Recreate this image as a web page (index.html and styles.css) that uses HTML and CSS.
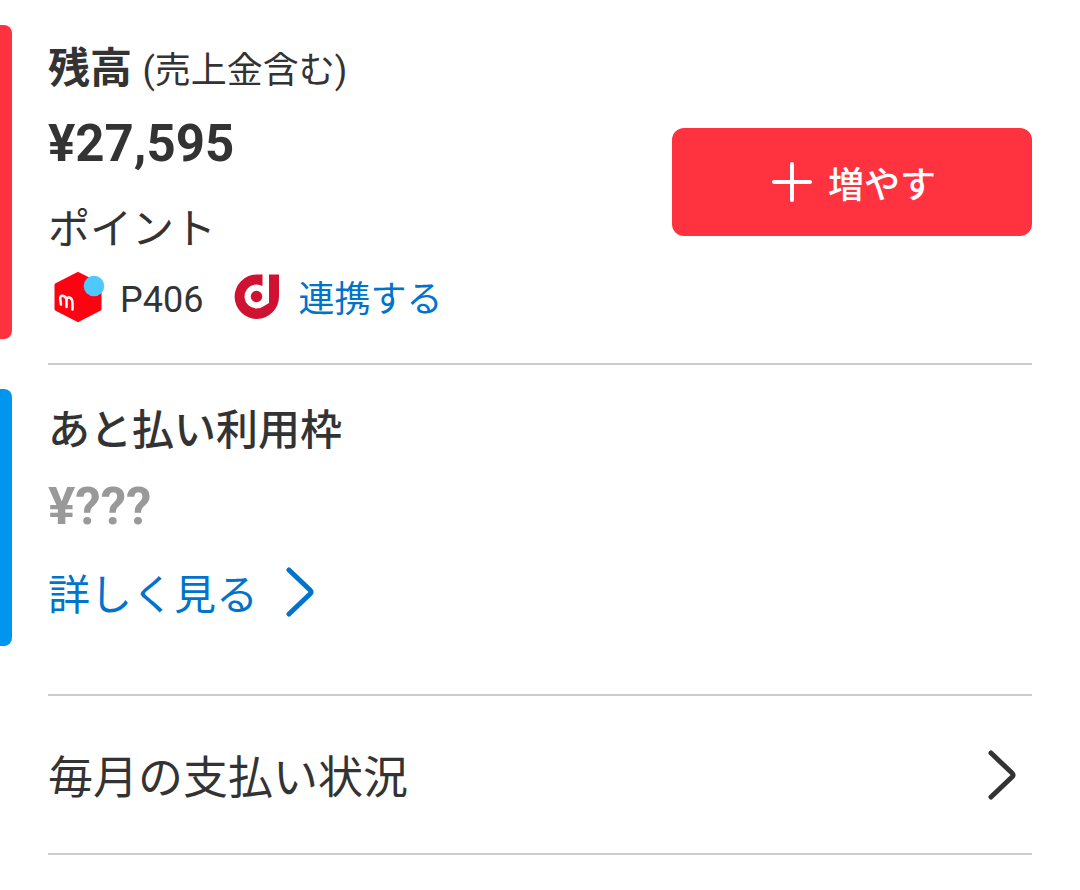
FILE: index.html
```html
<!DOCTYPE html>
<html lang="ja">
<head>
<meta charset="utf-8">
<meta name="viewport" content="width=device-width, initial-scale=1">
<title>残高</title>
<link rel="stylesheet" href="styles.css">
</head>
<body>
<main class="wallet">
  <section class="panel panel-balance">
    <div class="panel-body">
      <h2 class="title"><span class="title-strong">残高</span> <span class="title-note">(売上金含む)</span></h2>
      <p class="amount">¥27,595</p>
      <h3 class="subtitle">ポイント</h3>
      <div class="points">
        <svg class="logo-mercari" viewBox="0 4 60 52" aria-hidden="true">
          <path d="M30 8 51.500 19V43L30 54 8.500 43V19Z" fill="#ff0211" stroke="#ff0211" stroke-width="4" stroke-linejoin="round"/>
          <circle cx="46" cy="20" r="10.300" fill="#4dc9ff"/>
          <path d="M13 38.500 12.300 33.500Q11.800 29.300 14.800 29.800 18.500 30.600 18.500 35V41M18.500 35Q18.500 30.800 21.300 31.500 24.500 32.400 24.500 37V43.500" fill="none" stroke="#fff" stroke-width="2.500" stroke-linecap="round"/>
        </svg>
        <span class="points-value">P406</span>
        <svg class="logo-dpoint" viewBox="0 0 46 46" aria-hidden="true">
          <path d="M28.500 .500H22.500A22.200 22.200 0 1 0 45 22.700V.500H35V29L30 31.900A12 12 0 1 1 28.500 12.100Z" fill="#d01131"/>
          <circle cx="22.500" cy="22.500" r="5.700" fill="#d01131"/>
        </svg>
        <a class="link link-small" href="#link">連携する</a>
      </div>
    </div>
    <button class="charge" type="button">
      <svg class="plus" viewBox="0 0 40 40" aria-hidden="true"><path d="M20 2V38M2 20H38"/></svg>
      増やす
    </button>
  </section>

  <section class="panel panel-deferred">
    <div class="panel-body">
      <h2 class="title">あと払い利用枠</h2>
      <p class="amount amount-unknown">¥???</p>
      <a class="link link-details" href="#details">詳しく見る
        <svg class="chevron" viewBox="0 0 28 50" aria-hidden="true"><path d="M3 3 24 23Q26 25 24 27L3 47"/></svg>
      </a>
    </div>
  </section>

  <a class="status" href="#monthly">毎月の支払い状況
    <svg class="chevron" viewBox="0 0 28 50" aria-hidden="true"><path d="M3 3 24 23Q26 25 24 27L3 47"/></svg>
  </a>
</main>
</body>
</html>
```
FILE: styles.css
```css
* {
  box-sizing: border-box;
}

body {
  margin: 0;
  background: #fff;
  color: #333;
  font-family: Roboto, "Noto Sans CJK JP", sans-serif;
  font-size: 36px;
  line-height: 60px;
}

h2, h3, p {
  margin: 0;
}

a {
  text-decoration: none;
}

.wallet {
  padding-top: 25px;
}

/* Coloured bar at the left edge, rule below */
.panel {
  display: flex;
  align-items: center;
  justify-content: space-between;
  padding-right: 48px;
  position: relative;
}

.panel::before {
  content: "";
  flex: none;
  align-self: stretch;
  width: 12px;
  margin-right: 36px;
  border-radius: 0 8px 8px 0;
}

.panel-balance::before {
  background: #ff333f;
}

.panel-deferred::before {
  background: #0095ee;
}

.panel-body {
  flex: 1;
  padding: 14px 0 9px;
}

.panel-deferred .panel-body {
  padding: 12px 0 24px;
}

.panel-balance {
  margin-bottom: 50px;
}

.panel-balance::after,
.panel-deferred::after {
  content: "";
  position: absolute;
  left: 48px;
  right: 48px;
  top: calc(100% + 24px);
  height: 2px;
  background: #ccc;
}

.panel-deferred::after {
  top: calc(100% + 48px);
}

.title {
  font-size: 42px;
  font-weight: 500;
  line-height: 60px;
}

.title-strong {
  font-weight: 700;
}

.title-note {
  font-size: 36px;
  font-weight: 400;
  line-height: 1;
}

.amount {
  margin-top: 15px;
  font-size: 51px;
  font-weight: 700;
}

.amount-unknown {
  margin-top: 16px;
  color: #999;
}

.subtitle {
  margin-top: 26px;
  font-size: 42px;
  font-weight: 400;
}

.points {
  display: flex;
  align-items: center;
  margin-top: 10px;
}

.logo-mercari {
  width: 60px;
  height: 52px;
  margin-bottom: 8px;
}

.points-value {
  margin: 0 31px 0 12px;
}

.logo-dpoint {
  width: 46px;
  height: 46px;
  margin: 0 18px 6px 0;
}

.link {
  color: #0073cc;
}

.link-details {
  display: flex;
  align-items: center;
  gap: 28px;
  width: fit-content;
  margin-top: 25px;
  font-family: "Noto Sans CJK JP", sans-serif;
  font-size: 42px;
}

.chevron {
  flex: none;
  width: 28px;
  height: 50px;
  fill: none;
  stroke: currentColor;
  stroke-width: 5px;
  stroke-linecap: round;
}

.charge {
  display: flex;
  align-items: center;
  justify-content: center;
  gap: 16px;
  width: 360px;
  height: 108px;
  padding: 0 0 0 4px;
  border: 0;
  border-radius: 12px;
  background: #ff333f;
  color: #fff;
  font: 500 36px "Noto Sans CJK JP", sans-serif;
}

.plus {
  width: 40px;
  height: 40px;
  fill: none;
  stroke: #fff;
  stroke-width: 4px;
  stroke-linecap: round;
}

.status {
  display: flex;
  align-items: center;
  justify-content: space-between;
  margin: 50px 48px 0;
  padding: 49px 16px 48px 0;
  border-bottom: 2px solid #ccc;
  color: inherit;
  font-family: "Noto Sans CJK JP", sans-serif;
  font-size: 45px;
}
```
